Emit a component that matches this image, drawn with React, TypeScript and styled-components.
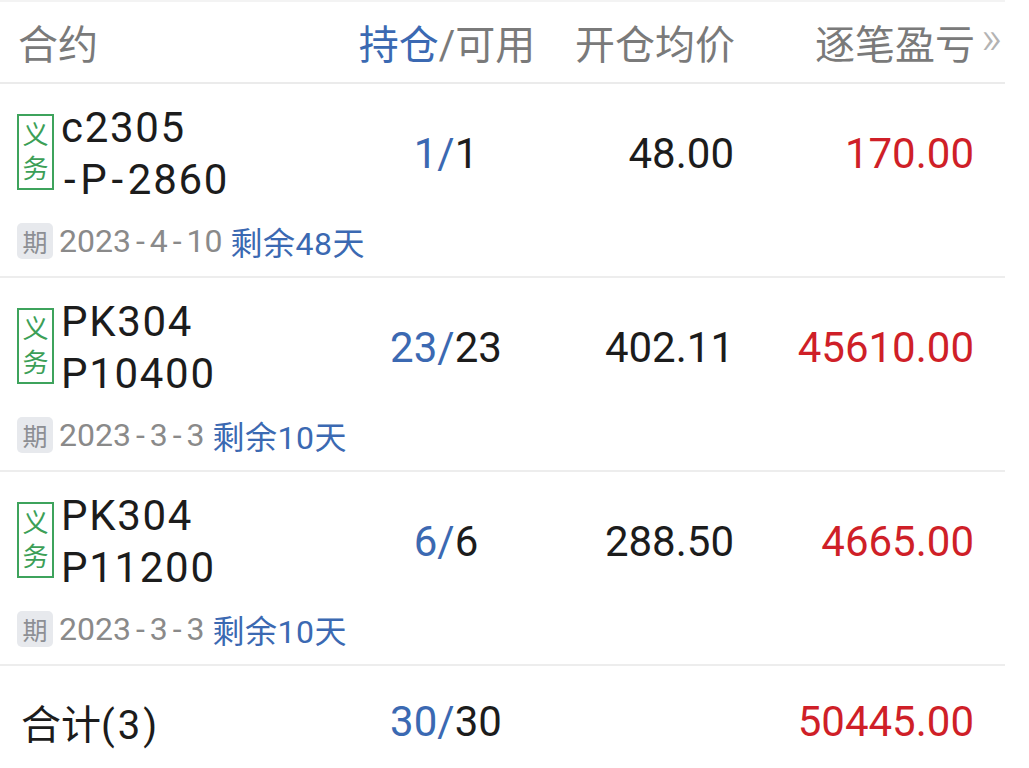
import React from "react";
import styled, { createGlobalStyle } from "styled-components";

const GlobalStyle = createGlobalStyle`
  html, body { margin: 0; padding: 0; background: #ffffff; }
  body { font-family: Roboto, "Noto Sans CJK SC", sans-serif; -webkit-font-smoothing: antialiased; }
`;

const BLUE = "#3b69b2";
const RED = "#cf1f28";
const INK = "#1c1c1c";
const GRAY = "#7a7a7a";

const cols = "330px 198px 189px 240px 30px";

const Table = styled.div`
  width: 1005px;
  overflow: hidden;
`;

const Header = styled.div`
  display: grid;
  grid-template-columns: ${cols};
  align-items: center;
  height: 80px;
  padding-left: 18px;
  border-top: 2px solid #f3f3f3;
  border-bottom: 2px solid #ebebeb;
  font-size: 40px;
  color: ${GRAY};
  white-space: nowrap;
`;

const HeadCell = styled.div<{ $align: "left" | "center" | "right" }>`
  text-align: ${(p) => p.$align};
`;

const Blue = styled.span`
  color: ${BLUE};
`;

const Chevron = styled.span`
  font-size: 46px;
  font-weight: 300;
  color: #b3b3b3;
  padding-left: 6px;
  position: relative;
  top: -4px;
`;

const Row = styled.div`
  display: grid;
  grid-template-columns: ${cols};
  grid-template-rows: 104px 36px;
  row-gap: 17px;
  align-items: center;
  padding: 18px 0 17px 17px;
  border-bottom: 2px solid #ededed;
  white-space: nowrap;
`;

const NameCell = styled.div`
  display: flex;
  align-items: center;
  gap: 7px;
`;

const DutyBadge = styled.div`
  box-sizing: border-box;
  width: 37px;
  height: 76px;
  border: 2px solid #3ea35c;
  display: flex;
  flex-direction: column;
  align-items: center;
  justify-content: center;
  font-size: 26px;
  line-height: 34px;
  color: #3c9f57;
  margin-top: -4px;
`;

const Name = styled.div`
  font-size: 42px;
  line-height: 52px;
  letter-spacing: 1.7px;
  color: ${INK};
`;

const Dash = styled.span<{ $pad: number }>`
  margin: 0 ${(p) => p.$pad}px;
`;

const Num = styled.div<{ $align: "center" | "right"; $color?: string }>`
  font-size: 42px;
  line-height: 52px;
  text-align: ${(p) => p.$align};
  color: ${(p) => p.$color || INK};
`;

const DateLine = styled.div`
  grid-column: 1 / -1;
  display: flex;
  align-items: center;
  gap: 6px;
  font-size: 32px;
  color: #8a8a8a;
`;

const ExpBadge = styled.div`
  width: 36px;
  height: 36px;
  border-radius: 5px;
  background: #e7e9ed;
  color: #8d8f94;
  font-size: 25px;
  display: flex;
  align-items: center;
  justify-content: center;
`;

const Remain = styled.span`
  color: ${BLUE};
  padding-left: 2px;
  letter-spacing: 0.5px;
`;

const Footer = styled.div`
  display: grid;
  grid-template-columns: ${cols};
  align-items: center;
  height: 112px;
  padding-left: 17px;
  white-space: nowrap;
`;

const TotalLabel = styled.div`
  font-size: 40px;
  color: ${INK};
  padding-left: 4px;
`;

const Count = styled.span`
  letter-spacing: 3px;
`;

function Dashed({ text, pad }: { text: string; pad: number }) {
  const parts = text.split("-");
  return (
    <>
      {parts.map((p, i) => (
        <React.Fragment key={i}>
          {i > 0 && <Dash $pad={pad}>-</Dash>}
          {p}
        </React.Fragment>
      ))}
    </>
  );
}

type Pos = {
  name: [string, string];
  qty: string;
  avail: string;
  price: string;
  pnl: string;
  date: string;
  remain: string;
};

const data: Pos[] = [
  { name: ["c2305", "-P-2860"], qty: "1", avail: "1", price: "48.00", pnl: "170.00", date: "2023-4-10", remain: "剩余48天" },
  { name: ["PK304", "P10400"], qty: "23", avail: "23", price: "402.11", pnl: "45610.00", date: "2023-3-3", remain: "剩余10天" },
  { name: ["PK304", "P11200"], qty: "6", avail: "6", price: "288.50", pnl: "4665.00", date: "2023-3-3", remain: "剩余10天" },
];

export default function App() {
  return (
    <>
      <GlobalStyle />
      <Table>
        <Header>
          <HeadCell $align="left">合约</HeadCell>
          <HeadCell $align="center">
            <Blue>持仓</Blue>/可用
          </HeadCell>
          <HeadCell $align="right">开仓均价</HeadCell>
          <HeadCell $align="right">逐笔盈亏</HeadCell>
          <Chevron>»</Chevron>
        </Header>
        {data.map((r, i) => (
          <Row key={i}>
            <NameCell>
              <DutyBadge>
                <span>义</span>
                <span>务</span>
              </DutyBadge>
              <Name>
                <Dashed text={r.name[0]} pad={3} />
                <br />
                <Dashed text={r.name[1]} pad={3} />
              </Name>
            </NameCell>
            <Num $align="center">
              <Blue>{r.qty}/</Blue>
              {r.avail}
            </Num>
            <Num $align="right">{r.price}</Num>
            <Num $align="right" $color={RED}>
              {r.pnl}
            </Num>
            <div />
            <DateLine>
              <ExpBadge>期</ExpBadge>
              <span>
                <Dashed text={r.date} pad={5} />
              </span>
              <Remain>{r.remain}</Remain>
            </DateLine>
          </Row>
        ))}
        <Footer>
          <TotalLabel>
            合计<Count>(3)</Count>
          </TotalLabel>
          <Num $align="center">
            <Blue>30/</Blue>30
          </Num>
          <div />
          <Num $align="right" $color={RED}>
            50445.00
          </Num>
          <div />
        </Footer>
      </Table>
    </>
  );
}
